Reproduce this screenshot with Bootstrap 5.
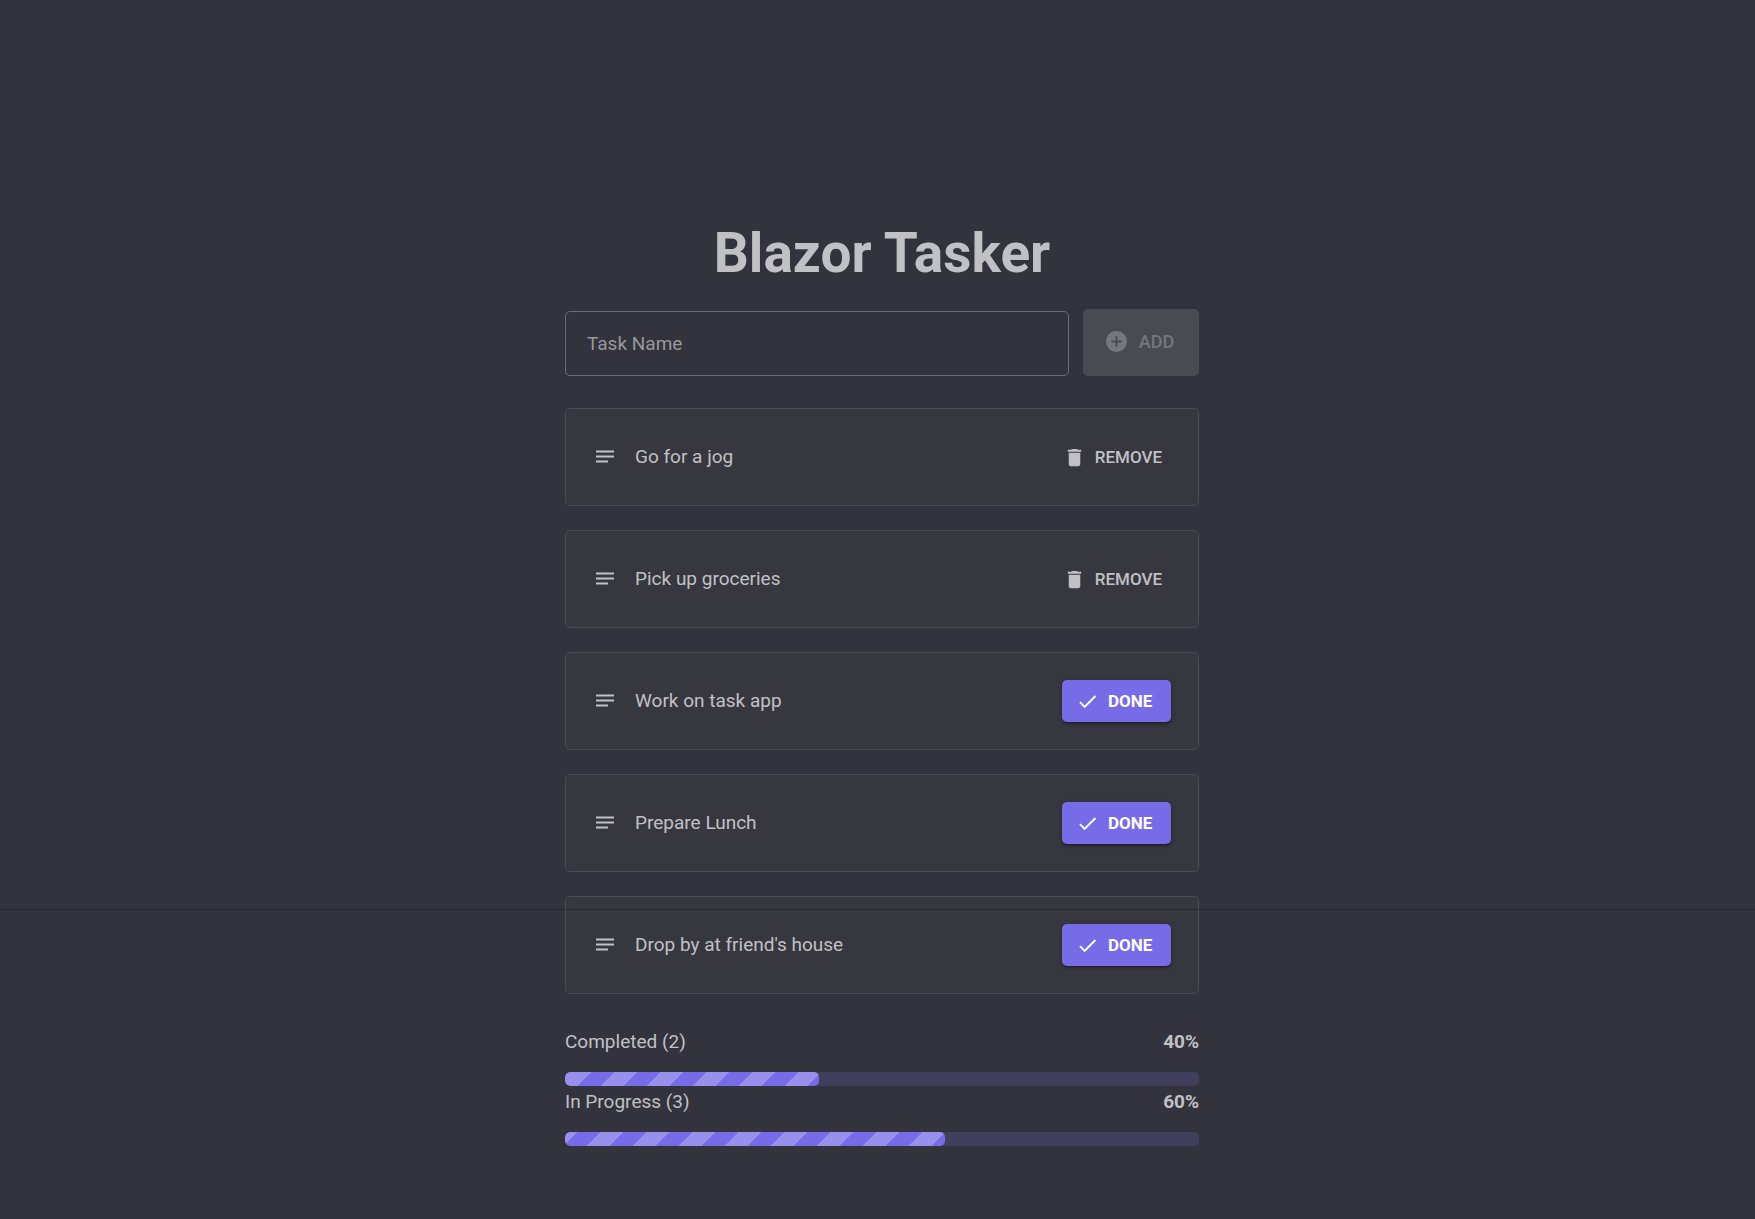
<!DOCTYPE html>
<html lang="en" data-bs-theme="dark">
<head>
<meta charset="utf-8">
<meta name="viewport" content="width=device-width, initial-scale=1">
<title>Blazor Tasker</title>
<link href="https://cdn.jsdelivr.net/npm/bootstrap@5.3.0/dist/css/bootstrap.min.css" rel="stylesheet">
<style>
:root{--page:#32333d;--surface:#373740;--line:#4a4a53;--primary:#776be7;--ink:#c1c1c5}
body{background:var(--page);color:var(--ink);font-family:Roboto,"Liberation Sans",sans-serif;font-size:19px;line-height:28px}
.tasker{width:100%;max-width:643px;padding:220px 0 72px 9px}
.tasker h1{color:var(--ink);font-size:55px;line-height:66px;font-weight:700;margin-bottom:23px}
.task-form{gap:14px}
.task-input{height:65px;padding:0 21px;font-size:19px;background:transparent;border:1px solid #6c6c75;border-radius:5px;color:var(--ink)}
.task-input:focus{background:transparent;border-color:var(--primary);box-shadow:none}
.task-label{left:22px;color:#98989c;pointer-events:none}
.task-input:not(:placeholder-shown)+.task-label{display:none}
.btn{--bs-btn-border-radius:5px;--bs-btn-border-width:0;font-size:17px;line-height:28px;font-weight:500;text-transform:uppercase}
.btn-add,.btn-add:disabled{width:116px;height:67px;padding:0 4px 2px 0;background:#4a4a53;color:#76767d;opacity:1;font-size:18px;gap:10px}
.btn-remove{color:var(--ink);height:42px;padding:0 9px;gap:9px}
.btn-remove:hover{color:#fff;background:#43434c}
.btn-done{background:var(--primary);color:#fff;width:109px;height:42px;padding:0 14px;gap:9px;font-weight:700;box-shadow:0 3px 2px -2px #0004,0 2px 3px #0003,0 1px 6px #0002}
.btn-done:hover{background:#6a5ee0;color:#fff}
.task-list{gap:24px;margin:32px 0 34px}
.task-item{height:98px;padding:0 27px;border:1px solid var(--line);border-radius:5px;background:var(--surface);gap:18px}
.task-item svg,.btn-add svg{fill:currentColor;flex:none}
.progress{--bs-progress-height:14px;--bs-progress-bg:#423e5e;--bs-progress-border-radius:5px;margin:16px 0 2px}
.stripes{background-color:var(--primary);border-radius:5px;background-image:linear-gradient(135deg,#ffffff40 25%,transparent 25%,transparent 50%,#ffffff40 50%,#ffffff40 75%,transparent 75%);background-size:46px 46px;background-position:3px 0}
.stripes-late{background-position:-11px 0}
.seam{top:909px;height:1px;background:#24242d;opacity:.7;pointer-events:none}
</style>
</head>
<body class="position-relative min-vh-100">
<svg class="d-none" aria-hidden="true">
<symbol id="notes" viewBox="0 0 24 24"><path d="M3 5.500h18v2H3zM3 10.500h18v2H3zM3 15.500h12v2H3z"/></symbol>
<symbol id="trash" viewBox="0 0 24 24"><path d="M6 19c0 1.100.9 2 2 2h8c1.100 0 2-.9 2-2V7H6v12zM19 4h-3.500l-1-1h-5l-1 1H5v2h14V4z"/></symbol>
<symbol id="check" viewBox="0 0 24 24"><path d="M9 16.170 4.830 12l-1.420 1.410L9 19 21 7l-1.410-1.410z"/></symbol>
<symbol id="plus" viewBox="0 0 24 24"><path d="M12 2C6.480 2 2 6.480 2 12s4.480 10 10 10 10-4.480 10-10S17.520 2 12 2zm5 11h-4v4h-2v-4H7v-2h4V7h2v4h4v2z"/></symbol>
</svg>
<main class="tasker mx-auto">
<h1 class="text-center">Blazor Tasker</h1>
<form class="task-form d-flex align-items-end">
<div class="position-relative flex-fill">
<input class="form-control task-input" id="taskName" type="text" placeholder=" ">
<label class="task-label position-absolute top-50 translate-middle-y" for="taskName">Task Name</label>
</div>
<button class="btn btn-add d-flex align-items-center justify-content-center flex-shrink-0" type="submit" disabled><svg width="25" height="25"><use href="#plus"/></svg>Add</button>
</form>
<ul class="task-list list-unstyled d-flex flex-column">
<li class="task-item d-flex align-items-center"><svg width="24" height="24"><use href="#notes"/></svg><span class="me-auto">Go for a jog</span><button class="btn btn-remove d-flex align-items-center" type="button"><svg width="23" height="23"><use href="#trash"/></svg>Remove</button></li>
<li class="task-item d-flex align-items-center"><svg width="24" height="24"><use href="#notes"/></svg><span class="me-auto">Pick up groceries</span><button class="btn btn-remove d-flex align-items-center" type="button"><svg width="23" height="23"><use href="#trash"/></svg>Remove</button></li>
<li class="task-item d-flex align-items-center"><svg width="24" height="24"><use href="#notes"/></svg><span class="me-auto">Work on task app</span><button class="btn btn-done d-flex align-items-center" type="button"><svg width="23" height="23"><use href="#check"/></svg>Done</button></li>
<li class="task-item d-flex align-items-center"><svg width="24" height="24"><use href="#notes"/></svg><span class="me-auto">Prepare Lunch</span><button class="btn btn-done d-flex align-items-center" type="button"><svg width="23" height="23"><use href="#check"/></svg>Done</button></li>
<li class="task-item d-flex align-items-center"><svg width="24" height="24"><use href="#notes"/></svg><span class="me-auto">Drop by at friend's house</span><button class="btn btn-done d-flex align-items-center" type="button"><svg width="23" height="23"><use href="#check"/></svg>Done</button></li>
</ul>
<section aria-label="Progress">
<div class="d-flex justify-content-between"><span>Completed (2)</span><b>40%</b></div>
<div class="progress" role="progressbar" aria-label="Completed" aria-valuenow="40" aria-valuemin="0" aria-valuemax="100"><div class="progress-bar stripes" style="width:40%"></div></div>
<div class="d-flex justify-content-between"><span>In Progress (3)</span><b>60%</b></div>
<div class="progress" role="progressbar" aria-label="In Progress" aria-valuenow="60" aria-valuemin="0" aria-valuemax="100"><div class="progress-bar stripes stripes-late" style="width:60%"></div></div>
</section>
</main>
<div class="seam position-absolute start-0 w-100"></div>
<script src="https://cdn.jsdelivr.net/npm/bootstrap@5.3.0/dist/js/bootstrap.bundle.min.js"></script>
</body>
</html>
